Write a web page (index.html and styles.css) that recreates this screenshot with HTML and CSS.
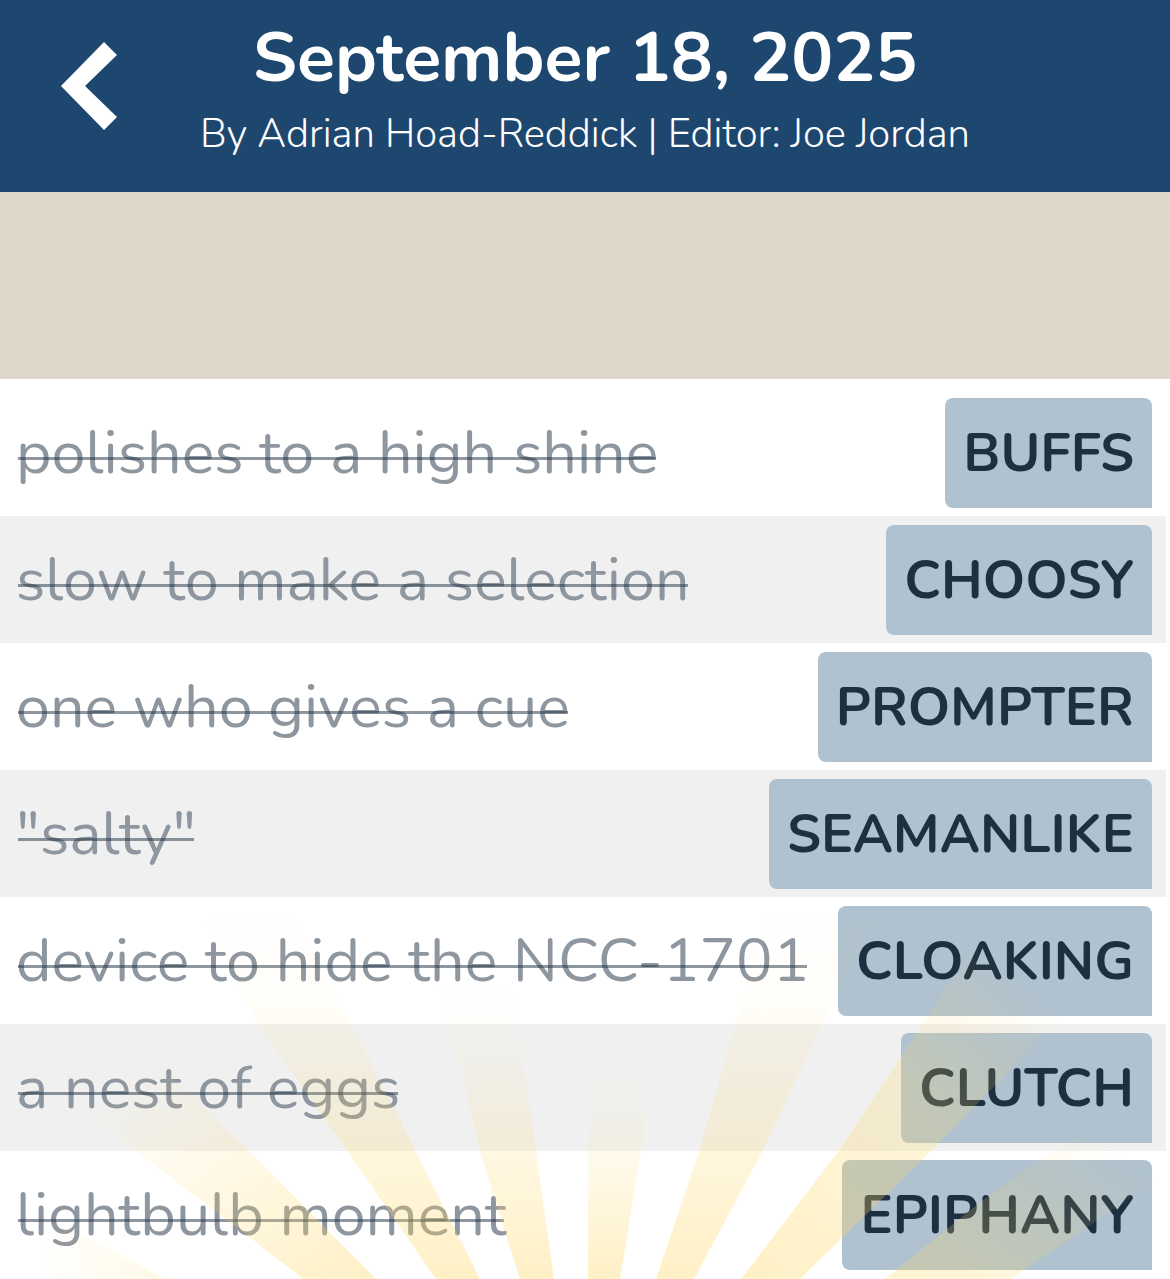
FILE: index.html
```html
<!DOCTYPE html>
<html lang="en">
<head>
  <meta charset="UTF-8">
  <meta name="viewport" content="width=device-width, initial-scale=1.0">
  <title>September 18, 2025</title>
  <link rel="stylesheet" href="styles.css">
</head>
<body>
  <header class="topbar">
    <button class="back" aria-label="Back">
      <svg viewBox="0 0 56 88"><path d="M43 0 56 13 24 44 56 75 43 88 0 44z"/></svg>
    </button>
    <div class="heading">
      <h1>September 18, 2025</h1>
      <p>By Adrian Hoad-Reddick | Editor: Joe Jordan</p>
    </div>
  </header>

  <div class="banner"></div>

  <main>
    <ul class="clues">
      <li><s>polishes to a high shine</s><span class="answer">BUFFS</span></li>
      <li><s>slow to make a selection</s><span class="answer">CHOOSY</span></li>
      <li><s>one who gives a cue</s><span class="answer">PROMPTER</span></li>
      <li><s>"salty"</s><span class="answer">SEAMANLIKE</span></li>
      <li><s>device to hide the NCC-1701</s><span class="answer">CLOAKING</span></li>
      <li><s>a nest of eggs</s><span class="answer">CLUTCH</span></li>
      <li><s>lightbulb moment</s><span class="answer">EPIPHANY</span></li>
    </ul>
  </main>

  <!-- sun rays over the list -->
  <svg class="rays" viewBox="0 0 1170 389" aria-hidden="true">
    <defs>
      <linearGradient id="up" x1="0" y1="0" x2="0" y2="1">
        <stop offset="0" stop-color="#ffd764" stop-opacity="0"/>
        <stop offset=".25" stop-color="#ffd764" stop-opacity=".04"/>
        <stop offset="1" stop-color="#ffd764" stop-opacity=".37"/>
      </linearGradient>
      <linearGradient id="left" x1="0" y1="0" x2="1" y2="1">
        <stop offset=".15" stop-color="#ffd764" stop-opacity="0"/>
        <stop offset="1" stop-color="#ffd764" stop-opacity=".37"/>
      </linearGradient>
      <linearGradient id="right" x1="1" y1="0" x2="0" y2="1">
        <stop offset=".22" stop-color="#ffd764" stop-opacity="0"/>
        <stop offset=".5" stop-color="#ffd764" stop-opacity=".22"/>
        <stop offset="1" stop-color="#ffd764" stop-opacity=".37"/>
      </linearGradient>
      <linearGradient id="side" x1="1" y1="0" x2="0" y2="1">
        <stop offset=".25" stop-color="#ffd764" stop-opacity="0"/>
        <stop offset=".6" stop-color="#ffd764" stop-opacity=".17"/>
        <stop offset="1" stop-color="#ffd764" stop-opacity=".3"/>
      </linearGradient>
      <linearGradient id="edge" x1="0" y1="0" x2="1" y2="0">
        <stop offset="0" stop-color="#ffd764" stop-opacity="0"/>
        <stop offset="1" stop-color="#ffd764" stop-opacity=".16"/>
      </linearGradient>
    </defs>
    <path fill="url(#edge)" d="M50 330 100 355 165 389H40z"/>
    <path fill="url(#left)" d="M60 200 150 165 205 218 250 262 376 389H303L230 332 140 264z"/>
    <path fill="url(#up)" d="M200 20H290L325 85 352 135 416 262 480 389H436L348 262 258 135z"/>
    <path fill="url(#up)" d="M435 90H510L525 185 536 262 554 389H520L480 262 462 185z"/>
    <path fill="url(#up)" d="M589 170H652L641 262 620 389H588z"/>
    <path fill="url(#up)" d="M767 20H880L822 135 762 262 694 389H656L699 262 735 135z"/>
    <path fill="url(#right)" d="M990 30 1130 50 1047 142 930 262 800 389H741L838 262 922 135z"/>
    <path fill="url(#side)" d="M885 389 983 310 1047 265 1165 195V285L1010 389z"/>
  </svg>
</body>
</html>
```

FILE: styles.css
```css
body {
  margin: 0;
  font-family: Nunito, Lato, sans-serif;
  background: #fff;
}
.topbar {
  position: relative;
  padding: 16px 0 24px;
  background: #1e4770;
  color: #fff;
  text-align: center;
}
.back {
  position: absolute;
  left: 61px;
  top: 42px;
  width: 56px;
  height: 88px;
  padding: 0;
  border: none;
  background: none;
  cursor: pointer;
}
.back svg {
  display: block;
  fill: #fff;
}
.heading h1 {
  margin: 0;
  font-size: 70px;
  line-height: 84px;
}
.heading p {
  margin: 0;
  font-size: 40px;
  font-weight: 300;
  line-height: 68px;
}
.banner {
  height: 187px;
  background: #ded7ca;
}
.clues {
  margin: 0;
  padding: 10px 4px 0 0;
  list-style: none;
}
.clues li {
  display: flex;
  align-items: center;
  justify-content: space-between;
  height: 127px;
  padding: 0 14px 0 16px;
}
.clues li:nth-child(even) {
  background: #f0f0f0;
}
.clues s {
  position: relative;
  color: #8e969f;
  font-size: 61px;
  line-height: 82px;
  text-decoration: none;
  white-space: nowrap;
}
/* thin line a bit lower than the default strike */
.clues s::after {
  content: "";
  position: absolute;
  left: 2px;
  right: 2px;
  top: 45px;
  height: 3px;
  background: rgba(29, 48, 66, 0.5);
}
.answer {
  padding: 0 18px;
  border-radius: 8px 8px 0 8px;
  background: #b0c2cf;
  color: #1d3042;
  font-size: 54px;
  font-weight: bold;
  line-height: 110px;
}
.rays {
  position: absolute;
  left: 0;
  top: 890px;
  width: 100%;
  pointer-events: none;
}
```
